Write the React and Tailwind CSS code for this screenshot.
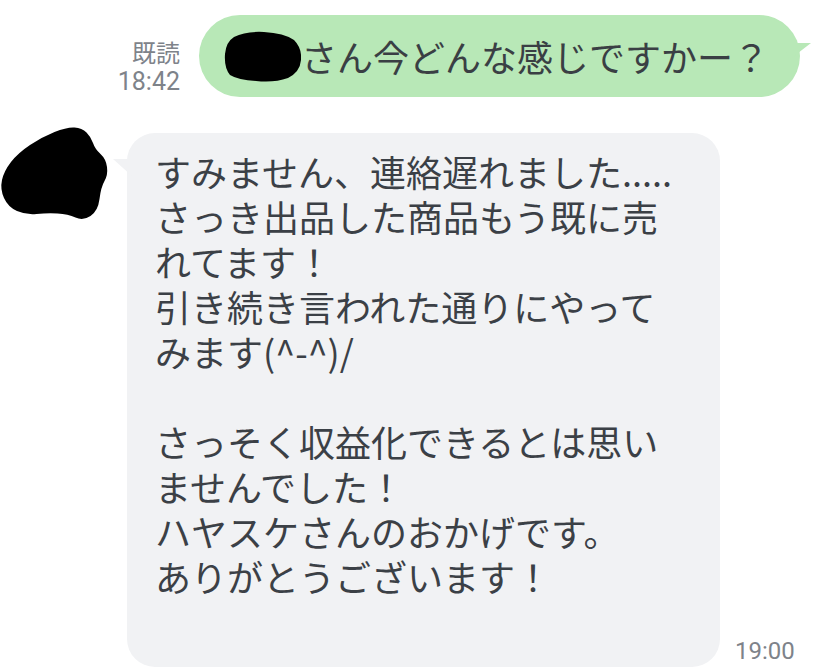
export default function App() {
  const jp = { fontFamily: '"Noto Sans CJK JP", "Noto Sans", sans-serif' };
  const meta = { fontFamily: 'Roboto, "Noto Sans CJK JP", sans-serif' };
  return (
    <div className="relative h-[670px] w-[815px] overflow-hidden bg-white" style={jp}>
      <div className="flex items-end justify-end pr-[15px] pt-[15px]">
        <div className="mb-[1px] mr-[19px] flex flex-col items-end text-[#7e838a]" style={meta}>
          <span className="text-[24px] leading-[28px]">既読</span>
          <span className="text-[25px] leading-[28px]">18:42</span>
        </div>
        <div className="relative flex h-[82px] w-[601px] items-center rounded-[41px] bg-[#b8e8b7] pl-[25px]">
          <svg width="77" height="52" viewBox="0 0 77 52" className="shrink-0">
            <path
              d="M10 7 Q22 1 40 2 Q60 3 70 10 Q78 18 77 30 Q76 42 64 48 Q50 53 32 51 Q14 50 6 45 Q0 38 1 24 Q2 12 10 7 Z"
              fill="#000"
            />
          </svg>
          <span className="whitespace-nowrap text-[36px] leading-none text-[#3a3f44]">
            さん今どんな感じですかー？
          </span>
          <svg
            width="28"
            height="18"
            viewBox="0 0 28 18"
            className="absolute left-[585px] top-[28px]"
          >
            <polygon points="0,0 27,0 5,17" fill="#b8e8b7" />
          </svg>
        </div>
      </div>

      <div className="mt-[28px] flex items-start">
        <svg width="110" height="100" viewBox="0 0 110 100" className="shrink-0">
          <path
            d="M54.5 7 Q67 2 74.5 2.5 Q82 3 86.5 7.5 Q91 12 93 18 Q95 24 100.5 29 Q106 34 107 42 Q108 50 104.5 56 Q101 62 99.5 74 Q98 86 90.5 91 Q83 96 75.5 92.5 Q68 89 57.5 88.5 Q47 88 36.5 89 Q26 90 17 86 Q8 82 4 73 Q0 64 2 55 Q4 46 11 37 Q18 28 30 20 Q42 12 54.5 7 Z"
            fill="#000"
          />
        </svg>
        <div className="relative ml-[17px] mt-[8px] w-[593px] shrink-0 rounded-[28px] bg-[#f1f2f4] pb-[68px] pl-[28px] pr-[20px] pt-[16px] text-[36px] leading-[45px] text-[#3b4046]">
          <svg
            width="20"
            height="20"
            viewBox="0 0 20 20"
            className="absolute left-[-14px] top-[26px]"
          >
            <polygon points="0,0 20,0 20,18" fill="#f1f2f4" />
          </svg>
          <div className="whitespace-nowrap">
            すみません、連絡遅れました.....
            <br />
            さっき出品した商品もう既に売
            <br />
            れてます！
            <br />
            引き続き言われた通りにやって
            <br />
            みます(^-^)/
            <br />
            <br />
            さっそく収益化できるとは思い
            <br />
            ませんでした！
            <br />
            ハヤスケさんのおかげです。
            <br />
            ありがとうございます！
          </div>
        </div>
        <div className="mb-[2px] ml-[15px] self-end text-[24px] leading-[28px] text-[#7e838a]" style={meta}>
          19:00
        </div>
      </div>
    </div>
  );
}
